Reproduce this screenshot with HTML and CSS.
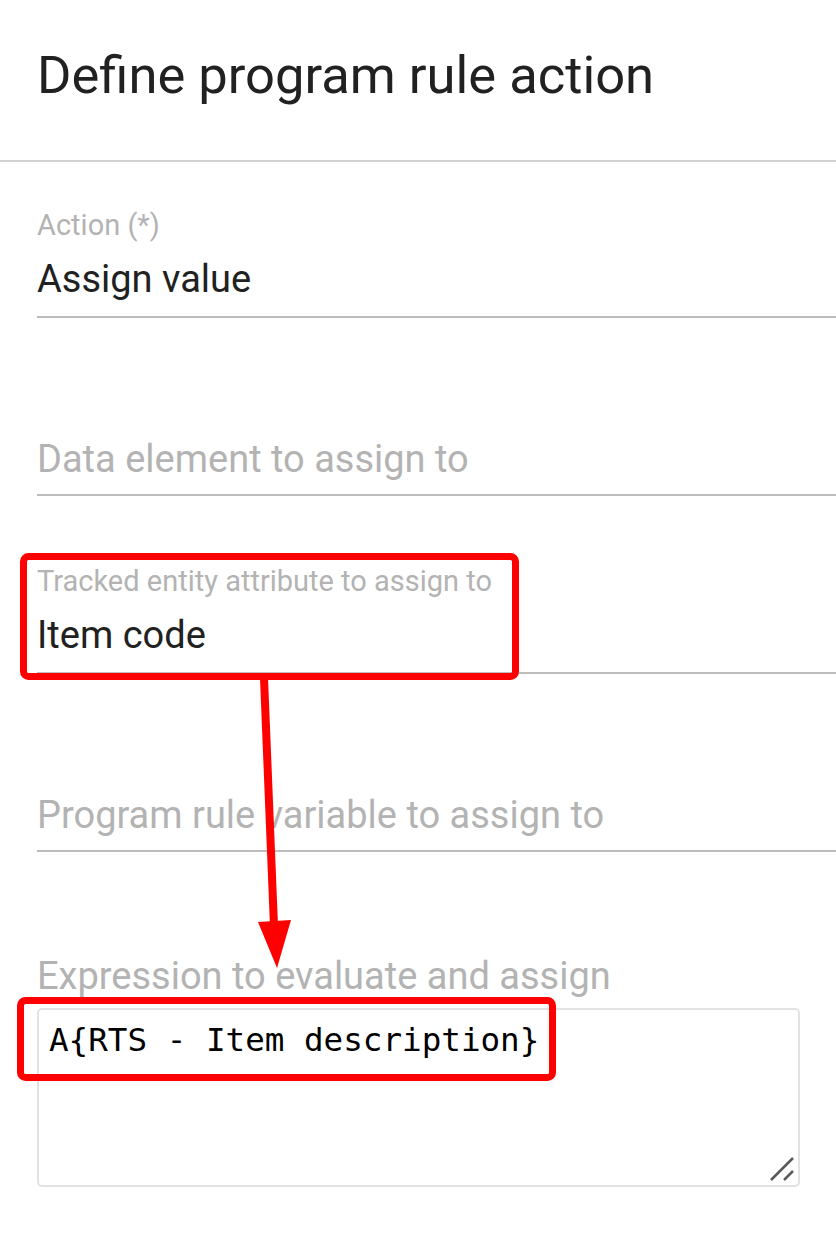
FILE: index.html
```html
<!DOCTYPE html>
<html lang="en">
<head>
  <meta charset="UTF-8">
  <meta name="viewport" content="width=device-width, initial-scale=1.0">
  <title>Define program rule action</title>
  <link rel="stylesheet" href="styles.css">
</head>
<body>
  <div class="header">
    <h1 class="title">Define program rule action</h1>
  </div>

  <form class="rule-form">
    <div class="field">
      <div class="label">Action (*)</div>
      <div class="value">Assign value</div>
    </div>

    <div class="field">
      <div class="label"></div>
      <div class="value placeholder">Data element to assign to</div>
    </div>

    <div class="field">
      <div class="label">Tracked entity attribute to assign to</div>
      <div class="value">Item code</div>
    </div>

    <div class="field">
      <div class="label"></div>
      <div class="value placeholder">Program rule variable to assign to</div>
    </div>

    <div class="expr">
      <div class="expr-label">Expression to evaluate and assign</div>
      <div class="expr-box">
        <textarea class="expr-input" readonly>A{RTS - Item description}</textarea>
        <svg class="grip" width="28" height="28" viewBox="0 0 28 28">
          <line x1="3" y1="25" x2="25" y2="3" stroke="#5a5a5a" stroke-width="2.5"/>
          <line x1="16" y1="25" x2="25" y2="16" stroke="#5a5a5a" stroke-width="2.5"/>
        </svg>
      </div>
    </div>
  </form>

  <!-- annotation drawn over the form -->
  <svg class="marks" width="836" height="1242" viewBox="0 0 836 1242">
    <rect x="23.5" y="556.5" width="492" height="120" rx="5" fill="none" stroke="#ff0000" stroke-width="7"/>
    <rect x="20.5" y="1000.5" width="532" height="77" rx="5" fill="none" stroke="#ff0000" stroke-width="7"/>
    <line x1="264" y1="678" x2="274" y2="926" stroke="#ff0000" stroke-width="8"/>
    <polygon points="258,922 291,920 277,968" fill="#ff0000"/>
  </svg>
</body>
</html>
```

FILE: styles.css
```css
body {
  margin: 0;
  background: #fff;
  font-family: Roboto, "Liberation Sans", sans-serif;
  color: #212121;
}
.header {
  box-sizing: border-box;
  height: 162px;
  border-bottom: 2px solid #d2d2d2;
  padding-left: 37px;
}
.title {
  margin: 0;
  padding-top: 43px;
  font-size: 52.5px;
  font-weight: 400;
  line-height: 64px;
}
.rule-form {
  padding: 45px 0 0 37px;
}
.field {
  border-bottom: 2px solid #bdbdbd;
  padding-bottom: 13px;
  margin-bottom: 67px;
}
.label {
  height: 36px;
  font-size: 29px;
  line-height: 36px;
  color: #b3b3b3;
}
.value {
  margin-top: 12px;
  height: 48px;
  font-size: 38px;
  line-height: 48px;
}
.placeholder {
  color: #b3b3b3;
  padding-top: 2px;
  box-sizing: border-box;
}
/* margin collapses with the last field's bottom margin */
.expr {
  margin-top: 100px;
}
.expr-label {
  font-size: 38px;
  line-height: 48px;
  color: #b3b3b3;
}
.expr-box {
  position: relative;
  width: 763px;
  margin-top: 8px;
}
.expr-input {
  display: block;
  box-sizing: border-box;
  width: 763px;
  height: 179px;
  padding: 8px 10px;
  border: 2px solid #e2e2e2;
  border-radius: 5px;
  font-family: "DejaVu Sans Mono", monospace;
  font-size: 32.6px;
  line-height: 44px;
  color: #000;
  outline: none;
  resize: none;
}
.grip {
  position: absolute;
  right: 4px;
  bottom: 4px;
}
.marks {
  position: absolute;
  top: 0;
  left: 0;
  pointer-events: none;
}
```
